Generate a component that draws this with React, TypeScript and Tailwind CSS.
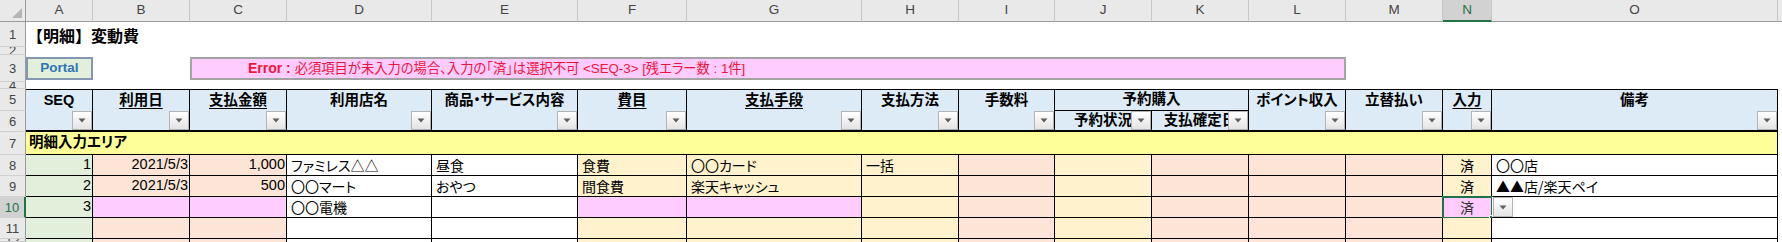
import React from "react";

// column widths (A..O), row header is 26px, P shows 4px
const W = [
  "w-[67px]", "w-[97px]", "w-[97px]", "w-[145px]", "w-[146px]", "w-[109px]", "w-[175px]",
  "w-[97px]", "w-[96px]", "w-[97px]", "w-[97px]", "w-[97px]", "w-[97px]", "w-[49px]", "w-[286px]",
];
const LETTERS = ["A", "B", "C", "D", "E", "F", "G", "H", "I", "J", "K", "L", "M", "N", "O"];

const GREEN = "bg-[#e2efda]";
const PEACH = "bg-[#fce4d6]";
const CREAM = "bg-[#fff2cc]";
const PINK = "bg-[#ffccff]";
const WHITE = "bg-white";

type Cell = { t?: string; bg: string; al?: "l" | "r" | "c" };

const rows: { n: number; cells: Cell[] }[] = [
  {
    n: 8,
    cells: [
      { t: "1", bg: GREEN, al: "r" }, { t: "2021/5/3", bg: PEACH, al: "r" }, { t: "1,000", bg: PEACH, al: "r" },
      { t: "ファミレス△△", bg: WHITE }, { t: "昼食", bg: WHITE }, { t: "食費", bg: CREAM }, { t: "〇〇カード", bg: CREAM },
      { t: "一括", bg: CREAM }, { bg: PEACH }, { bg: CREAM }, { bg: PEACH }, { bg: PEACH }, { bg: PEACH },
      { t: "済", bg: CREAM, al: "c" }, { t: "〇〇店", bg: WHITE },
    ],
  },
  {
    n: 9,
    cells: [
      { t: "2", bg: GREEN, al: "r" }, { t: "2021/5/3", bg: PEACH, al: "r" }, { t: "500", bg: PEACH, al: "r" },
      { t: "〇〇マート", bg: WHITE }, { t: "おやつ", bg: WHITE }, { t: "間食費", bg: CREAM }, { t: "楽天キャッシュ", bg: CREAM },
      { bg: CREAM }, { bg: PEACH }, { bg: CREAM }, { bg: PEACH }, { bg: PEACH }, { bg: PEACH },
      { t: "済", bg: CREAM, al: "c" }, { t: "▲▲店/楽天ペイ", bg: WHITE },
    ],
  },
  {
    n: 10,
    cells: [
      { t: "3", bg: GREEN, al: "r" }, { bg: PINK }, { bg: PINK },
      { t: "〇〇電機", bg: WHITE }, { bg: WHITE }, { bg: PINK }, { bg: PINK },
      { bg: CREAM }, { bg: PEACH }, { bg: CREAM }, { bg: PEACH }, { bg: PEACH }, { bg: PEACH },
      { t: "済", bg: PINK, al: "c" }, { bg: WHITE },
    ],
  },
  {
    n: 11,
    cells: [
      { bg: GREEN }, { bg: PEACH }, { bg: PEACH }, { bg: WHITE }, { bg: WHITE }, { bg: CREAM }, { bg: CREAM },
      { bg: CREAM }, { bg: PEACH }, { bg: CREAM }, { bg: PEACH }, { bg: PEACH }, { bg: PEACH },
      { bg: CREAM }, { bg: WHITE },
    ],
  },
];

const headers: { t: string; u?: boolean }[] = [
  { t: "SEQ" }, { t: "利用日", u: true }, { t: "支払金額", u: true }, { t: "利用店名" },
  { t: "商品・サービス内容" }, { t: "費目", u: true }, { t: "支払手段", u: true }, { t: "支払方法" }, { t: "手数料" },
];
const headersRight: { t: string; u?: boolean }[] = [
  { t: "ポイント収入" }, { t: "立替払い" }, { t: "入力", u: true }, { t: "備考" },
];

function Arrow() {
  return (
    <svg width="8" height="5" viewBox="0 0 8 5">
      <path d="M0.5 0.5H7.5L4 4.5Z" fill="#5f5f5f" />
    </svg>
  );
}

function FilterBtn() {
  return (
    <div className="absolute right-0 bottom-0 w-[20px] h-[19px] border border-[#b4b4b4] bg-gradient-to-b from-white to-[#e4e4e4] flex items-center justify-center">
      <Arrow />
    </div>
  );
}

function RowHead({ n, h, sel }: { n?: number; h: string; sel?: boolean }) {
  return (
    <div
      className={`w-[26px] ${h} shrink-0 box-border overflow-hidden flex items-center justify-center text-[13px] leading-[13px] border-b border-b-[#d0d0d0] ${
        sel ? "bg-[#d2d2d2] text-[#217346] border-r-2 border-r-[#217346]" : "bg-[#e9e9e9] text-[#444] border-r border-r-[#9b9b9b]"
      }`}
    >
      {n}
    </div>
  );
}

export default function App() {
  return (
    <div className="w-[1782px] h-[242px] overflow-hidden bg-white text-black font-['Liberation_Sans','Noto_Sans_CJK_JP',sans-serif]">
      {/* column letters */}
      <div className="flex h-[22px]">
        <div className="w-[26px] shrink-0 box-border bg-[#e9e9e9] border-r border-b border-[#9b9b9b] flex items-end justify-end p-[3px]">
          <svg width="10" height="10" viewBox="0 0 10 10">
            <path d="M10 0V10H0Z" fill="#b5b5b5" />
          </svg>
        </div>
        {LETTERS.map((l, i) => (
          <div
            key={l}
            className={`${W[i]} shrink-0 box-border flex items-center justify-center text-[13.5px] border-r border-r-[#c6c6c6] ${
              l === "N" ? "bg-[#d2d2d2] text-[#217346] border-b-2 border-b-[#217346]" : "bg-[#e9e9e9] text-[#444] border-b border-b-[#9b9b9b]"
            }`}
          >
            {l}
          </div>
        ))}
        <div className="w-[4px] shrink-0 box-border bg-[#e9e9e9] border-b border-b-[#9b9b9b]" />
      </div>

      {/* row 1 */}
      <div className="flex h-[25px]">
        <RowHead n={1} h="h-[25px]" />
        <div className="pl-[1px] flex items-center text-[16px] font-bold font-['Noto_Sans_CJK_JP',sans-serif]">【明細】変動費</div>
      </div>
      {/* row 2 */}
      <div className="flex h-[8px]">
        <RowHead n={2} h="h-[8px]" />
      </div>
      {/* row 3 */}
      <div className="flex h-[27px]">
        <RowHead n={3} h="h-[27px]" />
        <div className="w-[67px] shrink-0 pt-[2px]">
          <div className="h-[23px] box-border border-2 border-[#8497b0] bg-[#e2efda] flex items-center justify-center text-[13.5px] font-bold text-[#2f75b5]">
            Portal
          </div>
        </div>
        <div className="w-[97px] shrink-0" />
        <div className="w-[1156px] shrink-0 pt-[2px]">
          <div className="h-[23px] box-border border-2 border-[#a3a3a3] bg-[#ffccff] flex items-center pl-[56px] text-[13.3px] text-[#f0143c] whitespace-nowrap [font-feature-settings:'palt']">
            <span className="font-bold text-[14px]">Error :&nbsp;</span>
            <span>必須項目が未入力の場合、入力の「済」は選択不可 &lt;SEQ-3&gt; [残エラー数 : 1件]</span>
          </div>
        </div>
      </div>
      {/* row 4 */}
      <div className="flex h-[7px]">
        <RowHead n={4} h="h-[7px]" />
      </div>

      {/* rows 5-6 header block */}
      <div className="flex h-[43px] text-[14.5px] font-bold [font-feature-settings:'palt']">
        <div className="flex flex-col shrink-0 font-normal">
          <RowHead n={5} h="h-[22px]" />
          <RowHead n={6} h="h-[21px]" />
        </div>
        {headers.map((hd, i) => (
          <div key={hd.t} className={`${W[i]} shrink-0 relative box-border bg-[#ddebf7] border-t border-r border-b-2 border-black`}>
            <div className="h-[21px] flex items-center justify-center whitespace-nowrap">
              <span className={hd.u ? "underline underline-offset-[3px] decoration-1" : ""}>{hd.t}</span>
            </div>
            <FilterBtn />
          </div>
        ))}
        <div className="w-[194px] shrink-0 flex flex-col">
          <div className="h-[22px] box-border bg-[#ddebf7] border-t border-r border-b border-black flex items-center justify-center">
            予約購入
          </div>
          <div className="flex h-[21px]">
            {["予約状況", "支払確定日"].map((t) => (
              <div key={t} className="w-[97px] shrink-0 relative box-border bg-[#ddebf7] border-r border-b-2 border-black overflow-hidden flex items-center justify-center whitespace-nowrap">
                {t}
                <FilterBtn />
              </div>
            ))}
          </div>
        </div>
        {headersRight.map((hd, i) => (
          <div key={hd.t} className={`${W[i + 11]} shrink-0 relative box-border bg-[#ddebf7] border-t border-r border-b-2 border-black`}>
            <div className="h-[21px] flex items-center justify-center whitespace-nowrap">
              <span className={hd.u ? "underline underline-offset-[3px] decoration-1" : ""}>{hd.t}</span>
            </div>
            <FilterBtn />
          </div>
        ))}
      </div>

      {/* row 7 */}
      <div className="flex h-[23px]">
        <RowHead n={7} h="h-[23px]" />
        <div className="w-[1752px] shrink-0 box-border bg-[#ffff99] border-r border-b border-black flex items-center pl-[3px] text-[14.5px] font-bold [font-feature-settings:'palt']">
          明細入力エリア
        </div>
      </div>

      {/* data rows */}
      {rows.map((r) => (
        <div key={r.n} className="flex h-[21px] text-[14px] [font-feature-settings:'palt']">
          <RowHead n={r.n} h="h-[21px]" sel={r.n === 10} />
          {r.cells.map((c, i) => {
            const sel = r.n === 10 && i === 13;
            return (
              <div
                key={i}
                className={`${W[i]} ${c.bg} shrink-0 relative box-border border-r border-b border-black flex items-center whitespace-nowrap ${
                  c.al === "r"
                    ? "justify-end pr-[1px] text-[14.5px]"
                    : c.al === "c"
                      ? "justify-center font-['Noto_Sans_CJK_JP',sans-serif]"
                      : "justify-start pl-[4px] font-['Noto_Sans_CJK_JP',sans-serif]"
                } ${sel ? "text-[#333]" : ""}`}
              >
                {c.t}
                {sel && (
                  <>
                    <div className="absolute -left-[1px] -top-[1px] w-[51px] h-[23px] border-2 border-[#217346]" />
                    <div className="absolute -right-[4px] -bottom-[4px] w-[6px] h-[6px] bg-[#217346] border border-white" />
                  </>
                )}
                {r.n === 10 && i === 14 && (
                  <div className="-ml-[3px] w-[20px] h-[20px] box-border border border-[#b4b4b4] bg-gradient-to-b from-white to-[#e4e4e4] flex items-center justify-center">
                    <Arrow />
                  </div>
                )}
              </div>
            );
          })}
        </div>
      ))}

      {/* row 12 (partly visible) */}
      <div className="flex h-[3px]">
        <RowHead n={12} h="h-[3px]" />
        {rows[3].cells.map((c, i) => (
          <div key={i} className={`${W[i]} ${c.bg} shrink-0 box-border border-r border-black`} />
        ))}
      </div>
    </div>
  );
}
